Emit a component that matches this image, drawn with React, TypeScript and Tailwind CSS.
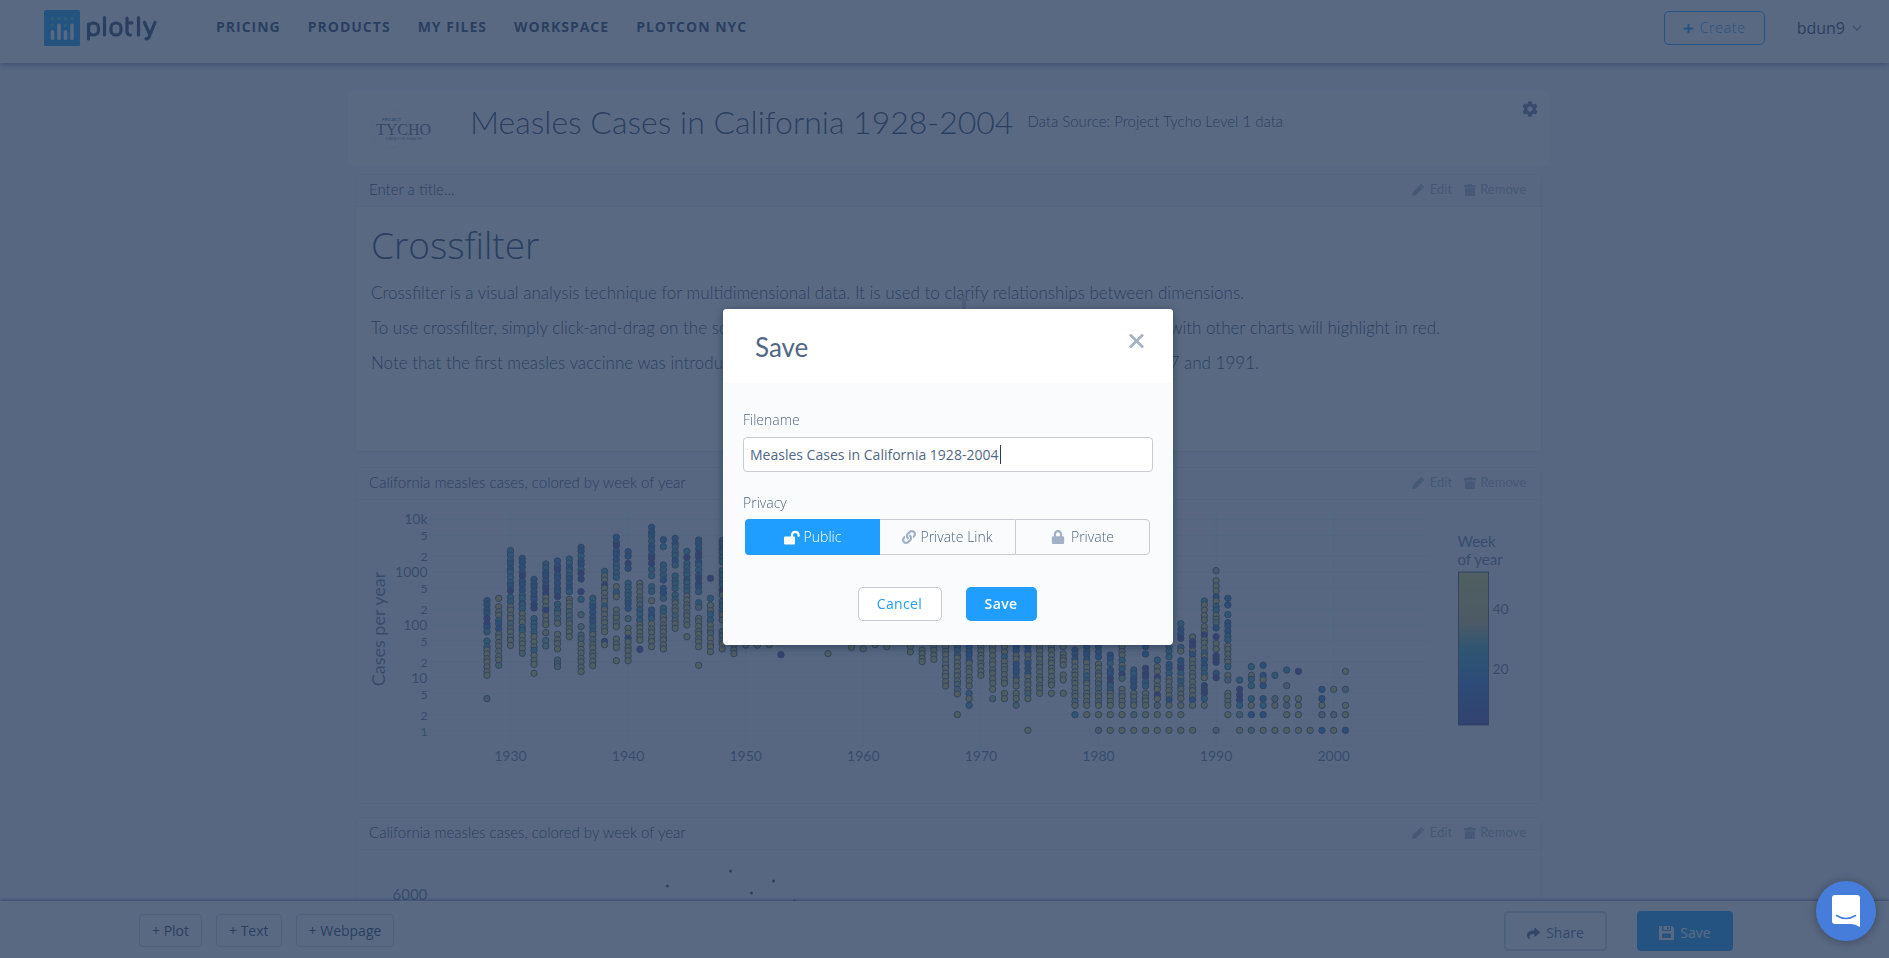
import type { ReactNode } from "react";
import { FaCog, FaLink, FaLock, FaPlus, FaShare } from "react-icons/fa";

const WEEK_COLORS: Record<string, string> = {
  n: "#5450b0",
  b: "#357ecc",
  t: "#43a8b6",
  g: "#9cbc92",
  y: "#d4c868",
};

type Run = [number, number, string];

// Vertical runs of points per year: start, end, colour sequence.
const YEARS: Record<number, Run[]> = {
  1928: [[452, 545, "bbbnbt"], [573, 590, "t"], [600, 676, "y"], [746, 746, "g"]],
  1929: [[445, 445, "y"], [470, 630, "yytbyyyyyy"], [646, 646, "g"]],
  1930: [[302, 422, "ttbttbn"], [442, 586, "tyyygyyyy"]],
  1931: [[325, 460, "bbnbbtb"], [465, 596, "tyytyyy"], [610, 610, "g"]],
  1932: [[388, 474, "bbn"], [506, 560, "tty"], [576, 643, "ytyyy"], [670, 670, "y"]],
  1933: [[342, 430, "tbbn"], [442, 524, "yynyyy"], [548, 548, "y"], [572, 588, "g"]],
  1934: [[333, 440, "bnbbbn"], [463, 520, "tgy"], [553, 597, "y"], [630, 650, "g"]],
  1935: [[327, 425, "tbtbbt"], [448, 470, "y"], [485, 560, "gyy"]],
  1936: [[292, 370, "btbtn"], [387, 387, "n"], [425, 425, "n"], [448, 448, "t"], [494, 494, "g"], [530, 530, "g"], [555, 665, "gyyyyy"]],
  1937: [[445, 515, "tbb"], [530, 647, "tygyyyyy"]],
  1938: [[364, 364, "t"], [378, 545, "ynyyytyyyyy"], [574, 584, "ny"]],
  1939: [[262, 382, "bnbbttt"], [410, 440, "yty"], [480, 530, "y"], [567, 593, "y"], [632, 632, "y"]],
  1940: [[305, 318, "b"], [340, 355, "nb"], [400, 475, "ttb"], [506, 506, "g"], [535, 632, "ynyyyyy"]],
  1941: [[400, 465, "yyg"], [480, 510, "tt"], [524, 570, "y"], [598, 598, "n"]],
  1942: [[232, 340, "bbtbbnn"], [358, 377, "t"], [410, 424, "t"], [452, 452, "y"], [480, 590, "btyyyyy"]],
  1943: [[269, 269, "b"], [290, 290, "t"], [345, 390, "ttb"], [415, 445, "bt"], [475, 525, "tyy"], [535, 597, "y"]],
  1944: [[265, 345, "bttbt"], [378, 415, "t"], [435, 535, "tyygyy"]],
  1945: [[304, 322, "tn"], [340, 425, "ttbtt"], [438, 525, "y"], [560, 560, "y"]],
  1946: [[270, 425, "bbnbtbnbt"], [458, 472, "tg"], [505, 590, "y"], [646, 646, "y"]],
  1947: [[385, 385, "n"], [445, 445, "t"], [466, 510, "yt"], [525, 605, "ygyyy"]],
  1948: [[272, 335, "bntt"], [362, 420, "ttn"], [435, 435, "y"], [455, 510, "ty"], [545, 597, "gy"]],
  1949: [[585, 611, "y"]],
  1950: [[585, 585, "g"]],
  1951: [[585, 585, "y"]],
  1952: [[584, 584, "y"]],
  1953: [[614, 614, "n"]],
  1957: [[611, 611, "y"]],
  1959: [[592, 592, "y"]],
  1960: [[596, 596, "y"]],
  1961: [[584, 584, "y"]],
  1962: [[590, 590, "y"]],
  1964: [[590, 606, "y"]],
  1965: [[600, 635, "y"]],
  1966: [[590, 628, "y"]],
  1967: [[590, 708, "y"]],
  1968: [[590, 650, "ty"], [665, 732, "yygy"], [794, 794, "y"]],
  1969: [[590, 630, "bb"], [640, 708, "y"], [730, 746, "ty"], [766, 766, "t"]],
  1970: [[590, 676, "y"]],
  1971: [[590, 700, "y"], [718, 718, "y"], [746, 746, "g"]],
  1972: [[590, 620, "yt"], [635, 700, "y"], [730, 746, "y"]],
  1973: [[590, 708, "bybby"], [730, 746, "y"], [766, 766, "g"]],
  1974: [[590, 720, "bybbyyy"], [730, 746, "gy"], [841, 841, "y"]],
  1975: [[590, 730, "y"]],
  1976: [[590, 705, "y"], [730, 730, "y"]],
  1977: [[590, 590, "y"], [612, 645, "y"], [675, 690, "y"], [730, 730, "y"]],
  1978: [[600, 766, "bbyyyyyygy"], [794, 794, "t"]],
  1979: [[590, 766, "bbyytyyyy"], [794, 794, "y"]],
  1980: [[590, 620, "b"], [642, 766, "ygyygyygy"], [794, 794, "y"], [841, 841, "g"]],
  1981: [[615, 640, "bt"], [660, 720, "bnt"], [730, 766, "y"], [794, 794, "y"], [841, 841, "y"]],
  1982: [[590, 685, "yytytng"], [718, 766, "y"], [794, 794, "y"], [841, 841, "y"]],
  1983: [[660, 710, "tbb"], [730, 766, "ygy"], [794, 794, "g"], [841, 841, "y"]],
  1984: [[590, 590, "b"], [612, 612, "b"], [655, 708, "nt"], [730, 766, "y"], [794, 794, "y"], [841, 841, "y"]],
  1985: [[630, 630, "t"], [650, 708, "ynyy"], [718, 735, "yn"], [746, 746, "y"], [766, 766, "g"], [794, 794, "y"], [841, 841, "y"]],
  1986: [[590, 620, "t"], [643, 750, "btyyyyb"], [766, 766, "y"], [794, 794, "y"], [841, 841, "y"]],
  1987: [[521, 521, "t"], [538, 565, "bn"], [592, 603, "ty"], [632, 745, "bntytyyy"], [766, 766, "y"], [794, 794, "y"], [841, 841, "y"]],
  1988: [[561, 561, "y"], [575, 750, "nybyyyyyyyb"], [766, 766, "y"], [841, 841, "y"]],
  1989: [[453, 465, "ty"], [480, 510, "y"], [530, 620, "ynyyyty"], [630, 683, "btty"], [707, 730, "n"], [746, 746, "t"], [766, 766, "y"]],
  1990: [[362, 362, "g"], [392, 423, "y"], [440, 480, "bytt"], [497, 518, "yg"], [534, 534, "b"], [560, 560, "n"], [580, 597, "y"], [617, 637, "n"], [670, 683, "bn"], [841, 841, "g"]],
  1991: [[445, 445, "b"], [465, 465, "b"], [494, 494, "t"], [518, 570, "bbtt"], [588, 650, "yyyt"], [676, 690, "yg"], [730, 766, "y"], [794, 794, "y"]],
  1992: [[690, 690, "t"], [718, 750, "n"], [766, 766, "t"], [794, 794, "g"], [841, 841, "y"]],
  1993: [[650, 650, "t"], [676, 688, "yt"], [707, 707, "t"], [746, 746, "t"], [766, 766, "y"], [794, 794, "b"], [841, 841, "g"]],
  1994: [[646, 646, "b"], [676, 690, "by"], [707, 707, "b"], [746, 746, "b"], [766, 766, "t"], [794, 794, "b"], [841, 841, "y"]],
  1995: [[676, 676, "t"], [746, 746, "g"], [766, 766, "y"], [841, 841, "y"]],
  1996: [[660, 660, "t"], [707, 707, "g"], [746, 746, "y"], [766, 766, "g"], [794, 794, "y"], [841, 841, "y"]],
  1997: [[664, 664, "n"], [746, 746, "y"], [766, 766, "y"], [794, 794, "y"], [841, 841, "y"]],
  1998: [[841, 841, "y"]],
  1999: [[718, 718, "b"], [746, 746, "b"], [766, 766, "y"], [794, 794, "g"], [841, 841, "b"]],
  2000: [[718, 718, "y"], [794, 794, "g"], [841, 841, "y"]],
  2001: [[664, 664, "y"], [718, 718, "g"], [766, 766, "y"], [794, 794, "y"], [841, 841, "b"]],
};

const xOf = (year: number) => 510 + (year - 1930) * 11.76;
const yOf = (cases: number) => 730.5 - 52.8 * Math.log10(cases);

const POINTS = Object.entries(YEARS).flatMap(([year, runs]) =>
  runs.flatMap(([start, end, colors]) => {
    const count = Math.round((end - start) / 13) + 1;
    return Array.from({ length: count }, (_, i) => {
      const wobble = i > 0 && i < count - 1 ? ((i * 7 + Number(year) * 3) % 5) - 2 : 0;
      return {
        x: xOf(Number(year)),
        y: 450 + (start + (count > 1 ? ((end - start) * i) / (count - 1) : 0) + wobble) / 3,
        color: WEEK_COLORS[colors[Math.floor((i / count) * colors.length)]],
      };
    });
  }),
);

const Y_TICKS: [number, string][] = [
  [1, "1"], [2, "2"], [5, "5"], [10, "10"], [20, "2"], [50, "5"], [100, "100"],
  [200, "2"], [500, "5"], [1000, "1000"], [2000, "2"], [5000, "5"], [10000, "10k"],
];
const X_TICKS = [1930, 1940, 1950, 1960, 1970, 1980, 1990, 2000];

function CasesChart() {
  return (
    <svg viewBox="356 500 1184 304" className="block h-[304px] w-full" role="img" aria-label="Cases per year">
      <defs>
        <linearGradient id="weeks" x1="0" y1="1" x2="0" y2="0">
          <stop offset="0" stopColor="#5450b0" />
          <stop offset="0.3" stopColor="#357ecc" />
          <stop offset="0.5" stopColor="#43a8b6" />
          <stop offset="0.68" stopColor="#c8ba7c" />
          <stop offset="1" stopColor="#d0d46c" />
        </linearGradient>
      </defs>
      <g stroke="#e4eaf2">
        {Y_TICKS.map(([v]) => (
          <line key={v} x1="430" x2="1428" y1={yOf(v)} y2={yOf(v)} />
        ))}
        {X_TICKS.map((v) => (
          <line key={v} x1={xOf(v)} x2={xOf(v)} y1="512" y2="746" />
        ))}
      </g>
      <g stroke="#4c5a6c" strokeWidth="1">
        {POINTS.map((p, i) => (
          <circle key={i} cx={p.x} cy={p.y} r="3.2" fill={p.color} />
        ))}
      </g>
      <g className="fill-[#667c9c] font-['Lato']">
        {Y_TICKS.map(([v, label]) => (
          <text key={v} x="427" y={yOf(v) + 5} textAnchor="end" fontSize={label.length > 1 ? 14 : 12}>
            {label}
          </text>
        ))}
        {X_TICKS.map((v) => (
          <text key={v} x={xOf(v)} y="761" textAnchor="middle" fontSize="14">
            {v}
          </text>
        ))}
        <text x="384" y="629" fontSize="18" textAnchor="middle" transform="rotate(-90 384 629)">
          Cases per year
        </text>
        <text x="1457" y="547" fontSize="15">Week</text>
        <text x="1457" y="565" fontSize="15">of year</text>
        <text x="1492" y="614" fontSize="14">40</text>
        <text x="1492" y="674" fontSize="14">20</text>
      </g>
      <rect x="1458" y="572" width="30" height="153" fill="url(#weeks)" stroke="#4c5a6c" strokeWidth="1" />
    </svg>
  );
}

function PeaksChart() {
  return (
    <svg viewBox="356 850 1184 120" className="block h-[120px] w-full" role="img" aria-label="Cases by week">
      <text x="392" y="900" fontSize="15" className="fill-[#667c9c] font-['Lato']">6000</text>
      <g fill="#3c4a5a">
        <circle cx="730" cy="871" r="1.5" />
        <circle cx="667" cy="886" r="1.5" />
        <circle cx="751" cy="893" r="1.5" />
        <circle cx="773" cy="881" r="1.5" />
        <circle cx="794" cy="901" r="1.5" />
      </g>
    </svg>
  );
}

function PlotlyLogo() {
  return (
    <a href="#home" className="flex items-center gap-1.5" aria-label="plotly">
      <svg viewBox="0 0 36 36" className="size-9">
        <rect width="36" height="36" rx="1.5" fill="#119dff" />
        <g fill="#3fc8b0">
          {[8.5, 15, 21.5, 28].map((x) => (
            <circle key={x} cx={x} cy="8.5" r="1.7" />
          ))}
          <circle cx="8.5" cy="15" r="1.7" />
          <circle cx="21.5" cy="15" r="1.7" />
        </g>
        <g fill="#fff">
          <rect x="6.8" y="20" width="3.4" height="10" rx="1.6" />
          <rect x="13.3" y="13.5" width="3.4" height="16.5" rx="1.6" />
          <rect x="19.8" y="20" width="3.4" height="10" rx="1.6" />
          <rect x="26.3" y="13.5" width="3.4" height="16.5" rx="1.6" />
        </g>
      </svg>
      <svg viewBox="0 0 71 26" className="h-[26px] w-[71px]" fill="none" stroke="#2a3f5f" strokeWidth="3.2" strokeLinecap="round" strokeLinejoin="round">
        <path d="M2.500 24V9M2.500 13a5 5 0 0 1 10 0v2a5 5 0 0 1-10 0" />
        <path d="M18.500 2.500V20" />
        <rect x="25" y="8" width="10" height="12" rx="4.750" />
        <path d="M41 3v13.500q0 3.500 3.500 3.500M41 7.800h5" />
        <path d="M52.500 2.500V20" />
        <path d="M58.500 7.500l5 11.500M69 7.500l-6 14.500q-.8 1.800-3 1.800" />
      </svg>
    </a>
  );
}

function TychoLogo() {
  return (
    <svg viewBox="0 0 66 44" className="h-11 w-[66px]" role="img" aria-label="Project Tycho">
      <circle cx="20" cy="22" r="19" fill="none" stroke="#e8ecf1" strokeWidth="1" strokeDasharray="3 2" />
      <text x="12" y="14" fontSize="4" fontWeight="700" fill="#4f86a4" className="font-['Liberation_Sans']">PROJECT</text>
      <text x="6" y="28" fontSize="16" fill="#5a6c86" className="font-['Liberation_Serif']">TYCHO</text>
      <text x="16" y="33" fontSize="4" fill="#6f98a0" className="font-['Liberation_Sans']">DATA FOR HEALTH</text>
    </svg>
  );
}

function PencilIcon() {
  return (
    <svg viewBox="0 0 12 12" className="size-3" fill="currentColor">
      <path d="M0 12l.8-4L7.300 1.500l3.200 3.200L4 11.200zM8 .8q1-1 2-.3l1.500 1.500q.9 1 0 2l-.4.400L7.600 1.200z" />
    </svg>
  );
}

function TrashIcon() {
  return (
    <svg viewBox="0 0 12 12" className="size-3" fill="currentColor">
      <path d="M4 0h4v1h4v2.500H0V1h4zM1 4.200h10V12H1z" />
      <path d="M3.500 5.500v5.500M6 5.500v5.500M8.500 5.500v5.500" stroke="#fff" strokeOpacity=".35" strokeWidth=".6" />
    </svg>
  );
}

function UnlockIcon() {
  return (
    <svg viewBox="0 0 16 15" className="h-[15px] w-4" fill="currentColor">
      <rect y="6.500" width="11" height="8" rx="1" />
      <path d="M8 7V4.500a3.400 3.400 0 0 1 6.600 0V6" fill="none" stroke="currentColor" strokeWidth="2.200" strokeLinecap="round" />
    </svg>
  );
}

function DiskIcon() {
  return (
    <svg viewBox="0 0 15 14" className="h-3.5 w-[15px]" fill="currentColor" fillRule="evenodd">
      <path d="M0 0h3v5h9V0h1l2 2v12H0zM3 7.500v4.500h9V7.500zM4.500 0H11v4H4.500zM8 .8v2.400h1.800V.8z" />
    </svg>
  );
}

function Panel({ title, muted, className, children }: { title: string; muted?: boolean; className: string; children: ReactNode }) {
  return (
    <section className={`shrink-0 overflow-hidden rounded-[4px] border border-[#dfe8f3] ${muted ? "bg-[#f3f6fa]" : "bg-white"} ${className}`}>
      <header className="flex h-8 items-center justify-between border-b border-[#dfe8f3] bg-[#f3f6fa] px-[13px] pb-0.5 font-['Lato'] text-[15px]">
        <h2 className="font-light text-[#2a3f5f]">{title}</h2>
        <div className="flex gap-3 pr-0.5 text-[13px] text-[#a2b1c6]">
          <button type="button" className="flex items-center gap-1.5"><PencilIcon />Edit</button>
          <button type="button" className="flex items-center gap-1"><TrashIcon />Remove</button>
        </div>
      </header>
      {children}
    </section>
  );
}

const NAV = ["PRICING", "PRODUCTS", "MY FILES", "WORKSPACE", "PLOTCON NYC"];

function SaveDialog() {
  return (
    <div role="dialog" aria-labelledby="save-title" className="w-[450px] overflow-hidden rounded-[4px] bg-[#f9fbfd] text-sm text-[#506784] shadow-[0_2px_8px_rgba(20,35,60,0.5)]">
      <header className="flex h-[74px] items-start justify-between bg-white pr-[29px] pl-8">
        <h1 id="save-title" className="pt-5 font-['Lato'] text-[26px] leading-9">Save</h1>
        <button type="button" aria-label="Close" className="pt-[25px]">
          <svg viewBox="0 0 15 14" className="h-3.5 w-[15px]" stroke="#a2b1c6" strokeWidth="2.600">
            <path d="M1 .5l13 13M14 .5L1 13.500" />
          </svg>
        </button>
      </header>
      <form className="px-5 pt-[27px] pb-6" onSubmit={(e) => e.preventDefault()}>
        <label htmlFor="filename" className="block leading-5 font-light">Filename</label>
        <div className="relative mt-[7px]">
          <input id="filename" type="text" defaultValue="Measles Cases in California 1928-2004" className="h-[35px] w-full rounded-[4px] border border-[#c8ccd2] bg-white px-1.5" />
          <span className="absolute top-2 left-[257px] h-[19px] w-px bg-[#2a3f5f]" />
        </div>
        <fieldset className="mt-[21px]">
          <legend className="leading-5 font-light">Privacy</legend>
          <div className="mt-[6px] mr-[3px] ml-0.5 grid h-9 grid-cols-3 font-light">
            <label className="flex items-center justify-center gap-1 rounded-l-[4px] bg-[#1f9eff] text-white">
              <input type="radio" name="privacy" defaultChecked className="sr-only" />
              <UnlockIcon />Public
            </label>
            <label className="flex items-center justify-center gap-1 border-y border-[#c8ccd2]">
              <input type="radio" name="privacy" className="sr-only" />
              <FaLink className="size-3.5 text-[#a2b1c6]" />Private Link
            </label>
            <label className="flex items-center justify-center gap-1.5 rounded-r-[4px] border border-[#c8ccd2]">
              <input type="radio" name="privacy" className="sr-only" />
              <FaLock className="size-3.5 text-[#a2b1c6]" />Private
            </label>
          </div>
        </fieldset>
        <div className="mt-8 flex justify-center gap-6 pr-0.5">
          <button type="button" className="h-[34px] w-[84px] rounded-[5px] border border-[#c8ccd2] bg-white tracking-wide text-[#1f9eff]">Cancel</button>
          <button type="submit" className="h-[34px] w-[71px] rounded-[5px] bg-[#1f9eff] font-semibold tracking-wide text-white">Save</button>
        </div>
      </form>
    </div>
  );
}

export default function App() {
  return (
    <div className="flex h-screen flex-col overflow-hidden bg-[#f3f6fa] font-['Open_Sans',sans-serif] text-[#2a3f5f]">
      <header className="relative flex h-[63px] shrink-0 items-start justify-between bg-white pt-2.5 pr-[27px] pl-11 shadow-[0_1px_6px_rgba(42,63,95,0.7)]">
        <div className="flex items-start gap-[59px]">
          <PlotlyLogo />
          <nav className="flex gap-[27px] pt-[7px] text-sm leading-5 font-bold tracking-[1px]">
            {NAV.map((item) => (
              <a key={item} href="#nav">{item}</a>
            ))}
          </nav>
        </div>
        <div className="flex items-center gap-8 pt-px">
          <button type="button" className="flex h-[34px] w-[101px] items-center justify-center gap-1.5 rounded-[5px] border border-[#119dff] text-sm font-light tracking-wider text-[#119dff]">
            <FaPlus className="size-[11px]" />Create
          </button>
          <button type="button" className="flex items-center gap-[7px] text-base">
            bdun9
            <svg viewBox="0 0 10 6" className="h-1.5 w-2.5" fill="none" stroke="#8295b0" strokeWidth="1.500"><path d="M.8.8L5 5l4.200-4.200" /></svg>
          </button>
        </div>
      </header>

      <main className="min-h-0 flex-1 overflow-hidden pt-7 pl-2">
        <div className="mx-auto flex w-full max-w-[1201px] flex-col">
          <section className="flex h-[75px] shrink-0 items-start rounded-[4px] bg-white pr-[11px] pl-[22px]">
            <div className="pt-4"><TychoLogo /></div>
            <h1 className="pt-[11px] pl-[34px] font-['Lato'] text-[32px] leading-10 font-light">Measles Cases in California 1928-2004</h1>
            <p className="flex-1 pt-5 pl-3.5 font-['Lato'] text-[15px] leading-5 font-light">Data Source: Project Tycho Level 1 data</p>
            <button type="button" aria-label="Settings" className="pt-2.5"><FaCog className="size-4 text-[#6b80a0]" /></button>
          </section>

          <div className="flex flex-col px-[7px] pt-2">
            <Panel title="Enter a title..." className="h-[278px]">
              <div className="relative px-[15px] pt-2.5">
                <h2 className="text-[37px] leading-[56px] font-light">Crossfilter</h2>
                <div className="flex flex-col gap-[11px] pt-2 font-['Lato'] text-[17px] leading-6 font-light">
                  <p>Crossfilter is a visual analysis technique for multidimensional data. It is used to clarify relationships between dimensions.</p>
                  <p className="flex w-[1069px] max-w-full justify-between">
                    <span>To use crossfilter, simply click-and-drag on the scatter plots below. Points shared</span>
                    <span>with other charts will highlight in red.</span>
                  </p>
                  <p className="flex w-[888px] max-w-full justify-between">
                    <span>Note that the first measles vaccinne was introduced in 1963, with outbreaks in</span>
                    <span>1977 and 1991.</span>
                  </p>
                </div>
                <svg viewBox="0 0 40 40" className="absolute top-[88px] left-[588px] size-10" fill="#c3cddb">
                  <path d="M20 0l6 6h-4v12h12v-4l6 6-6 6v-4H22v12h4l-6 6-6-6h4V22H6v4l-6-6 6-6v4h12V6h-4z" />
                </svg>
              </div>
            </Panel>
            <Panel title="California measles cases, colored by week of year" muted className="mt-[15px] h-[337px]">
              <CasesChart />
            </Panel>
            <Panel title="California measles cases, colored by week of year" muted className="mt-[13px] h-[337px]">
              <PeaksChart />
            </Panel>
          </div>
        </div>
      </main>

      <footer className="relative flex h-[57px] shrink-0 items-start justify-between bg-white pr-[156px] pl-[139px] text-sm shadow-[0_-1px_3px_rgba(42,63,95,0.7)]">
        <div className="flex gap-3.5 pt-[13px]">
          {["+ Plot", "+ Text", "+ Webpage"].map((label) => (
            <button key={label} type="button" className="h-[33px] rounded-[4px] border border-[#c8d4e3] px-3">{label}</button>
          ))}
        </div>
        <div className="flex gap-[30px] pt-2.5">
          <button type="button" className="flex h-10 w-[103px] items-center justify-center gap-1.5 rounded-[4px] border-2 border-[#c8d4e3] pt-1 text-[#506784]">
            <FaShare className="size-[13px]" />Share
          </button>
          <button type="button" className="flex h-10 w-24 items-center justify-center gap-1.5 rounded-[4px] bg-[#119dff] pt-1 text-white">
            <DiskIcon />Save
          </button>
        </div>
      </footer>

      <div className="fixed inset-0 flex items-start justify-center bg-[#2a3f5f]/78 pt-[309px] pl-[7px]">
        <SaveDialog />
      </div>

      <button type="button" aria-label="Open chat" className="fixed right-[13px] bottom-[17px] flex size-[60px] items-center justify-center rounded-full bg-[#467ddb] shadow-[0_1px_10px_rgba(0,0,0,0.3)]">
        <svg viewBox="0 0 28 32" className="h-8 w-7">
          <path d="M3 0h22q3 0 3 3v29q-5-3-9-3H3q-3 0-3-3V3q0-3 3-3z" fill="#fff" />
          <path d="M4.500 20.500q9.500 6 19 0" fill="none" stroke="#467ddb" strokeWidth="1.500" strokeLinecap="round" />
        </svg>
      </button>
    </div>
  );
}
